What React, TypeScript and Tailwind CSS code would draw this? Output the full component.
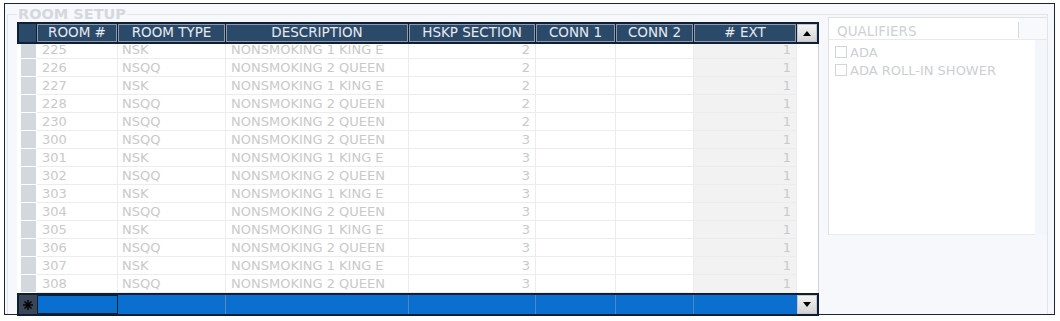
import React from "react";

type Row = { room: string; type: string; desc: string; hskp: string };

const rows: Row[] = [
  { room: "225", type: "NSK", desc: "NONSMOKING 1 KING E", hskp: "2" },
  { room: "226", type: "NSQQ", desc: "NONSMOKING 2 QUEEN", hskp: "2" },
  { room: "227", type: "NSK", desc: "NONSMOKING 1 KING E", hskp: "2" },
  { room: "228", type: "NSQQ", desc: "NONSMOKING 2 QUEEN", hskp: "2" },
  { room: "230", type: "NSQQ", desc: "NONSMOKING 2 QUEEN", hskp: "2" },
  { room: "300", type: "NSQQ", desc: "NONSMOKING 2 QUEEN", hskp: "3" },
  { room: "301", type: "NSK", desc: "NONSMOKING 1 KING E", hskp: "3" },
  { room: "302", type: "NSQQ", desc: "NONSMOKING 2 QUEEN", hskp: "3" },
  { room: "303", type: "NSK", desc: "NONSMOKING 1 KING E", hskp: "3" },
  { room: "304", type: "NSQQ", desc: "NONSMOKING 2 QUEEN", hskp: "3" },
  { room: "305", type: "NSK", desc: "NONSMOKING 1 KING E", hskp: "3" },
  { room: "306", type: "NSQQ", desc: "NONSMOKING 2 QUEEN", hskp: "3" },
  { room: "307", type: "NSK", desc: "NONSMOKING 1 KING E", hskp: "3" },
  { room: "308", type: "NSQQ", desc: "NONSMOKING 2 QUEEN", hskp: "3" },
];

const hdr =
  "flex items-center justify-center border border-[#8e9aab] bg-[#2b4969] text-[13.5px] leading-none text-[#e6ebf1] whitespace-nowrap";
const cell = "h-[18px] border-r border-b border-[#ececec] leading-[17px] whitespace-nowrap overflow-hidden";

function Arrow({ up }: { up: boolean }) {
  return (
    <svg width="8" height="5" viewBox="0 0 8 5">
      {up ? <path d="M0 5 L4 0 L8 5 Z" fill="#000" /> : <path d="M0 0 L8 0 L4 5 Z" fill="#000" />}
    </svg>
  );
}

function Star() {
  return (
    <svg width="10" height="10" viewBox="0 0 10 10">
      <g stroke="#000" strokeWidth="1.4">
        <line x1="5" y1="0" x2="5" y2="10" />
        <line x1="0" y1="5" x2="10" y2="5" />
        <line x1="1.5" y1="1.5" x2="8.5" y2="8.5" />
        <line x1="8.5" y1="1.5" x2="1.5" y2="8.5" />
      </g>
    </svg>
  );
}

export default function App() {
  return (
    <div
      className="w-[1060px] h-[321px] bg-white pt-[3px] pl-[4px]"
      style={{ fontFamily: '"DejaVu Sans", Verdana, sans-serif' }}
    >
      <div className="w-[1051px] h-[312px] border border-[#16263f] bg-[#f6f8fb] pt-[2px] pl-[2px]">
        <fieldset className="w-[1041px] h-[308px] border border-b-0 border-[#e1e5ea] pl-[9px] pt-0">
          <legend className="px-[1px] text-[14.5px] leading-[16px] font-bold text-[#d3d8de]">ROOM SETUP</legend>
          <div className="flex items-start gap-[9px]">
            {/* GRID */}
            <div className="flex flex-col w-[802px]">
              {/* header */}
              <div className="flex h-[22px] w-[802px] gap-[1px] border-2 border-[#0f1f36] bg-[#0f1f36]">
                <div className="w-[17px] bg-[#2b4969]" />
                <div className={`${hdr} w-[80px]`}>ROOM #</div>
                <div className={`${hdr} w-[107px]`}>ROOM TYPE</div>
                <div className={`${hdr} w-[182px]`}>DESCRIPTION</div>
                <div className={`${hdr} w-[126px]`}>HSKP SECTION</div>
                <div className={`${hdr} w-[79px]`}>CONN 1</div>
                <div className={`${hdr} w-[77px]`}>CONN 2</div>
                <div className={`${hdr} w-[102px]`}># EXT</div>
                <div className="flex w-[20px] items-center justify-center border border-[#c4c8ce] bg-linear-to-b from-[#f4f4f4] to-[#d4d4d4]">
                  <Arrow up />
                </div>
              </div>
              {/* body */}
              <div className="h-[249px] w-[802px] overflow-hidden border-r border-[#cfd3d8] bg-white text-[13px] text-[#c9c9c9]">
                <div className="-mt-[3px]">
                  {rows.map((r) => (
                    <div key={r.room} className="flex h-[18px]">
                      <div className="w-[20px] pl-[4px]">
                        <div className="h-[17px] w-[15px] bg-[#d3d8df]" />
                      </div>
                      <div className={`${cell} w-[81px] pl-[5px]`}>{r.room}</div>
                      <div className={`${cell} w-[108px] pl-[4px]`}>{r.type}</div>
                      <div className={`${cell} w-[183px] pl-[5px]`}>{r.desc}</div>
                      <div className={`${cell} w-[127px] pr-[5px] text-right`}>{r.hskp}</div>
                      <div className={`${cell} w-[80px]`} />
                      <div className={`${cell} w-[78px]`} />
                      <div className={`${cell} w-[103px] pr-[5px] text-right bg-[#f2f2f2]`}>1</div>
                      <div className="w-[21px]" />
                    </div>
                  ))}
                </div>
              </div>
              {/* new row */}
              <div className="flex h-[23px] w-[802px] border-2 border-[#0e1d31] bg-[#0b6fd0]">
                <div className="flex w-[18px] items-center justify-center bg-[#3a4759]">
                  <Star />
                </div>
                <div className="w-[81px] border border-[#0d1f35]" />
                <div className="w-[108px] border-r border-[#4d87c4]" />
                <div className="w-[183px] border-r border-[#4d87c4]" />
                <div className="w-[127px] border-r border-[#4d87c4]" />
                <div className="w-[80px] border-r border-[#4d87c4]" />
                <div className="w-[78px] border-r border-[#4d87c4]" />
                <div className="w-[103px]" />
                <div className="flex w-[20px] items-center justify-center border border-[#c4c8ce] bg-linear-to-b from-[#f4f4f4] to-[#d4d4d4]">
                  <Arrow up={false} />
                </div>
              </div>
            </div>
            {/* QUALIFIERS */}
            <div className="-mt-[5px] flex h-[218px] w-[219px] flex-col border-l border-t border-[#dde1e6]">
              <div className="flex h-[22px] border-b border-[#e6e9ed] bg-white">
                <div className="flex w-[189px] items-center pl-[8px] pt-[6px] text-[13.5px] leading-none text-[#cdd1d6]">QUALIFIERS</div>
                <div className="mt-[4px] mb-[1px] w-[1px] bg-[#d6dade]" />
                <div className="flex-1 bg-[#f7f9fb]" />
              </div>
              <div className="flex flex-1">
                <div className="w-[206px] bg-white pt-[3px] border-b border-[#e8ebef]">
                  {["ADA", "ADA ROLL-IN SHOWER"].map((t) => (
                    <div key={t} className="flex h-[18px] items-center pl-[6px]">
                      <div className="h-[12px] w-[12px] border border-[#d2d5d9] bg-white" />
                      <span className="pl-[3px] text-[13px] leading-none text-[#cbcfd4]">{t}</span>
                    </div>
                  ))}
                </div>
                <div className="flex-1 bg-[#f3f6fa]" />
              </div>
            </div>
          </div>
        </fieldset>
      </div>
    </div>
  );
}
